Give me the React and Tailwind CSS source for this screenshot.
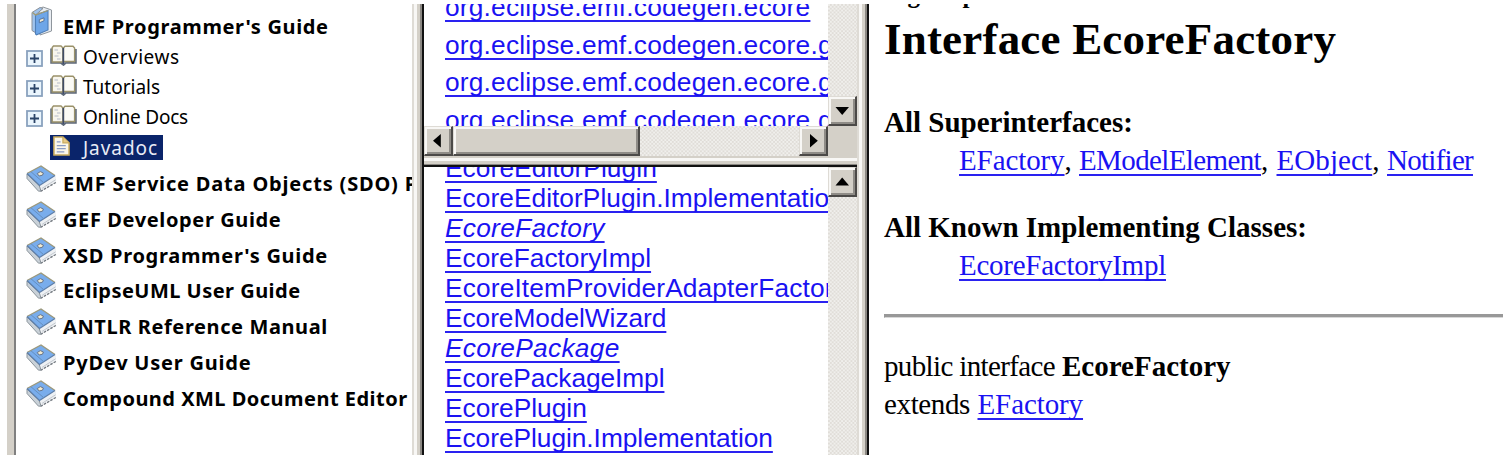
function ClosedBook() {
  return (
    <svg className="h-[28px] w-[31px] shrink-0" viewBox="0 0 31 28">
      <path d="M15 26 L30 17.5 V12 L29 10.5 L13.5 21 Z" fill="#eef1f4" />
      <path d="M14.5 26.4 L30 17.4" stroke="#6f757c" strokeWidth="1.3" strokeDasharray="2.6 1.2" fill="none" />
      <path d="M16 23.4 L29.6 14.8" stroke="#c3c8ce" strokeWidth="1" fill="none" />
      <path d="M1 9 L1 13.5 L12.5 26.2 L15 26 L13.2 20.5 Z" fill="#c9d1d8" stroke="#8b949b" strokeWidth="1" />
      <path d="M1 8.5 L15 1 L29 10.5 L13.5 20.5 Z" fill="#79adec" />
      <path d="M1 8.5 L15 1 L29 10.5" fill="none" stroke="#9b987c" strokeWidth="1.4" />
      <path d="M1 8.5 L13.5 20.5 L29 10.5" fill="none" stroke="#5d7ea8" strokeWidth="1.2" />
      <path d="M5 6.8 L17.6 17.6" stroke="#6690bf" strokeWidth="1" />
      <path d="M11.2 8.6 L14.3 6.6 L17.4 8 L16.5 10.2 L13.2 11 Z" fill="#f1ead0" stroke="#66748a" strokeWidth="1" />
    </svg>
  );
}

function GuideBook() {
  return (
    <svg className="mt-[2px] ml-[5px] h-[30px] w-[22px] shrink-0" viewBox="0 0 22 30">
      <path d="M8 3 L12 1 L20.5 4 V25 L9 29 Z" fill="#e9edf2" stroke="#8f969d" strokeWidth="1" />
      <path d="M1 6.5 L9 1.5 L12 2.5 L5 8.5 V27 L1 24.5 Z" fill="#9fc3ec" stroke="#8b9199" strokeWidth="1" />
      <path d="M4.5 9 L17 4.5 V24 L5.5 28.8 L4.5 28 Z" fill="#6ea6e8" stroke="#4f7fb8" strokeWidth="1.1" />
      <path d="M1.5 6.5 L4.5 9 L17 4.5" fill="none" stroke="#a39b72" strokeWidth="1.3" />
      <path d="M8.3 13.6 L13 11.8 V14.8 L8.3 16.8 Z" fill="#f4ead0" stroke="#53739f" strokeWidth="1" />
    </svg>
  );
}

function OpenBook() {
  return (
    <svg className="-mt-[5px] h-[21px] w-[27px] shrink-0" viewBox="0 0 27 21">
      <path d="M1 3.5 V18 H10.5 L13.5 20.2 L16 18 H26 V4" fill="#8593a8" stroke="#5d6878" strokeWidth="1.5" />
      <path d="M2.2 2.5 L3.5 1 H11 L13 3 V17 H2.2 Z" fill="#f8f6ee" stroke="#9a9169" strokeWidth="1.4" />
      <path d="M13.4 3 L15 1.2 H23 L24.6 3 V16.5 H13.4 Z" fill="#fbfaf5" stroke="#9a9169" strokeWidth="1.4" />
      <path d="M13.3 3 V19" stroke="#414c66" strokeWidth="1.7" />
      <path d="M4.5 5 H8 M7 8 H10.5 M4.5 11 H8.5 M7 14 H10.5" stroke="#b3b9c8" strokeWidth="1.2" />
    </svg>
  );
}

function PageIcon() {
  return (
    <svg className="ml-[3px] h-[20px] w-[17px] shrink-0" viewBox="0 0 18 22" preserveAspectRatio="none">
      <path d="M1 1 H10.5 L17 7.5 V21 H1 Z" fill="#fbf7ea" stroke="#c9ab5c" strokeWidth="1.6" />
      <path d="M10.5 1 V7.5 H17" fill="#e7c987" stroke="#c9ab5c" strokeWidth="1.3" />
      <path d="M4 6.5 H8 M4 10.5 H13.5 M4 14 H13.5 M4 17.5 H12" stroke="#8a9cc4" strokeWidth="1.4" />
    </svg>
  );
}

function Expander() {
  return (
    <svg className="h-[17px] w-[17px] shrink-0" viewBox="0 0 17 17">
      <rect x="1" y="1" width="15" height="15" fill="#eaf5fd" stroke="#8aa2be" strokeWidth="1.8" />
      <path d="M4 8.5 H13 M8.5 4 V13" stroke="#2b4468" strokeWidth="1.8" />
    </svg>
  );
}

const chapters = [
  { label: "Overviews", track: "tracking-[0.5px]" },
  { label: "Tutorials", track: "tracking-normal" },
  { label: "Online Docs", track: "tracking-[-0.22px]" },
];

const guides = [
  { label: "EMF Service Data Objects (SDO) Programmer's Guide", track: "tracking-[0.82px]" },
  { label: "GEF Developer Guide", track: "tracking-[0.62px]" },
  { label: "XSD Programmer's Guide", track: "tracking-[0.7px]" },
  { label: "EclipseUML User Guide", track: "tracking-[0.47px]" },
  { label: "ANTLR Reference Manual", track: "tracking-[0.6px]" },
  { label: "PyDev User Guide", track: "tracking-[0.78px]" },
  { label: "Compound XML Document Editor", track: "tracking-[0.48px]" },
];

const packages = [
  "org.eclipse.emf.codegen.ecore",
  "org.eclipse.emf.codegen.ecore.genmodel",
  "org.eclipse.emf.codegen.ecore.genmodel.impl",
  "org.eclipse.emf.codegen.ecore.genmodel.util",
];

const classes = [
  { label: "EcoreEditorPlugin", style: "tracking-[0.08px]" },
  { label: "EcoreEditorPlugin.Implementation", style: "tracking-[0.04px]" },
  { label: "EcoreFactory", style: "italic tracking-[0.27px]" },
  { label: "EcoreFactoryImpl", style: "" },
  { label: "EcoreItemProviderAdapterFactory", style: "tracking-[0.14px]" },
  { label: "EcoreModelWizard", style: "tracking-[-0.05px]" },
  { label: "EcorePackage", style: "italic tracking-[0.3px]" },
  { label: "EcorePackageImpl", style: "tracking-[-0.08px]" },
  { label: "EcorePlugin", style: "" },
  { label: "EcorePlugin.Implementation", style: "tracking-[-0.04px]" },
];

const checker =
  "bg-[repeating-conic-gradient(#e0ddd8_0%_25%,#f0efec_0%_50%)] bg-[length:3.75px_3.75px]";

const link =
  "text-[#1a12f2] underline decoration-[#2a22f0] decoration-[2px] underline-offset-[4px] [text-decoration-skip-ink:none]";

const raised =
  "border-t border-r-2 border-b-2 border-l border-t-[#dedbd5] border-r-[#4c4a48] border-b-[#4c4a48] border-l-[#dedbd5] bg-[#d4d0c8] shadow-[inset_2px_2px_0_#f8f7f5,inset_-2px_-2px_0_#8f8c87]";

const arrows = {
  left: "M16.8 8 V21.5 L9 14.7 Z",
  right: "M11 8 V21.5 L18.8 14.7 Z",
  up: "M7.5 18.5 H21 L14.2 10.5 Z",
  down: "M7.5 11 H21 L14.2 19 Z",
};

function ScrollButton({ dir }) {
  return (
    <div className={"h-[30px] w-[29px] shrink-0 overflow-hidden " + raised}>
      <svg className="-mt-px -ml-px h-[30px] w-[29px] max-w-none" viewBox="0 0 29 30">
        <path d={arrows[dir]} fill="#000" />
      </svg>
    </div>
  );
}

function FrameEdge() {
  return (
    <div className="flex w-[12px] shrink-0">
      <div className="w-[2px] bg-[#dedbd5]" />
      <div className="w-[3px] bg-[#f8f7f5]" />
      <div className="w-[3px] bg-[#d4d0c8]" />
      <div className="w-[2px] bg-[#8b8883]" />
      <div className="w-[2px] bg-[#111]" />
    </div>
  );
}

function Contents() {
  return (
    <nav className="flex w-[405px] shrink-0 border-l-[7px] border-[#d4d0c8]">
      <div className="w-[2px] shrink-0 bg-[#808080]" />
      <div className="min-w-0 flex-1 overflow-hidden pl-[10px] font-['Noto_Sans','DejaVu_Sans',sans-serif] whitespace-nowrap text-black">
        <div className="flex h-[39px] items-start text-[20px] font-bold">
          <GuideBook />
          <span className="ml-[10px] pt-[6px] leading-[34px] tracking-[0.64px]">EMF Programmer's Guide</span>
        </div>
        {chapters.map((c) => (
          <div key={c.label} className="flex h-[30px] items-center text-[19px]">
            <Expander />
            <div className="ml-[7px] flex">
              <OpenBook />
            </div>
            <span className={"ml-[6px] pb-[2px] leading-[30px] " + c.track}>{c.label}</span>
          </div>
        ))}
        <div className="flex h-[32px] pt-[2px]">
          <div className="ml-[24px] flex h-[25px] w-[113px] items-start bg-[#0a246a] pt-px text-[19px] text-[#e8ebf5]">
            <PageIcon />
            <span className="ml-[13px] leading-[25px] tracking-[0.93px]">Javadoc</span>
          </div>
        </div>
        {guides.map((g) => (
          <div key={g.label} className="flex h-[35.8px] text-[20px] font-bold">
            <ClosedBook />
            <span className={"ml-[6px] pt-[2px] leading-[33px] " + g.track}>{g.label}</span>
          </div>
        ))}
      </div>
    </nav>
  );
}

function PackageFrame() {
  return (
    <section className="flex h-[152px] shrink-0">
      <div className="flex w-[404px] flex-col">
        <div className="h-[122px] overflow-hidden pl-[21px]">
          <div className="-mt-[15px] text-[26.3px] tracking-[0.2px] whitespace-nowrap">
            {packages.map((p) => (
              <div key={p} className="h-[37.67px] leading-[37.67px]">
                <a className={link}>{p}</a>
              </div>
            ))}
          </div>
        </div>
        <div className="flex h-[30px]">
          <ScrollButton dir="left" />
          <div className={"w-[187px] " + raised} />
          <div className={"flex-1 " + checker} />
          <ScrollButton dir="right" />
        </div>
      </div>
      <div className="flex w-[29px] flex-col bg-[#d4d0c8]">
        <div className={"h-[92px] " + checker} />
        <ScrollButton dir="down" />
      </div>
    </section>
  );
}

function ClassFrame() {
  return (
    <section className="flex h-[288px]">
      <div className="w-[404px] overflow-hidden pl-[21px]">
        <div className="-mt-[14px] text-[26.3px] whitespace-nowrap">
          {classes.map((c) => (
            <div key={c.label} className="h-[30px] leading-[30px]">
              <a className={link + " " + c.style}>{c.label}</a>
            </div>
          ))}
        </div>
      </div>
      <div className={"w-[29px] " + checker}>
        <ScrollButton dir="up" />
      </div>
    </section>
  );
}

function Details() {
  return (
    <main className="min-w-0 flex-1 overflow-hidden pl-[15px] font-['Liberation_Serif',serif] text-[29px] whitespace-nowrap text-black">
      <div className="-mt-[24px] h-[30px] text-[25px] leading-[30px] font-bold">org.eclipse.emf.ecore</div>
      <h1 className="mt-[4px] h-[50px] text-[45px] leading-[50px] font-bold tracking-[0.2px]">Interface EcoreFactory</h1>
      <dl className="mt-[39px] leading-[38px]">
        <dt className="h-[38px] font-bold">All Superinterfaces:</dt>
        <dd className="flex h-[38px] pl-[75px]">
          <span className="w-[120px]"><a className={link + " tracking-[-0.1px]"}>EFactory</a>,</span>
          <span className="w-[197.5px]"><a className={link + " tracking-[-0.62px]"}>EModelElement</a>,</span>
          <span className="w-[110.5px]"><a className={link + " tracking-[0.1px]"}>EObject</a>,</span>
          <a className={link + " tracking-[-0.73px]"}>Notifier</a>
        </dd>
        <dt className="mt-[29px] h-[38px] font-bold">All Known Implementing Classes:</dt>
        <dd className="h-[38px] pl-[75px]">
          <a className={link + " tracking-[-0.25px]"}>EcoreFactoryImpl</a>
        </dd>
      </dl>
      <hr className="mt-[30px] h-[4px] border-t-[3px] border-b border-l border-t-[#989898] border-b-[#d8d8d8] border-l-[#999]" />
      <div className="mt-[29px] leading-[38px]">
        <p className="flex h-[38px]">
          <span className="w-[178px] tracking-[-0.63px]">public interface</span>
          <b>EcoreFactory</b>
        </p>
        <p className="flex h-[38px]">
          <span className="w-[93.5px] tracking-[-0.37px]">extends</span>
          <a className={link + " tracking-[-0.1px]"}>EFactory</a>
        </p>
      </div>
    </main>
  );
}

export default function App() {
  return (
    <div className="h-[462px] w-[1503px] overflow-hidden bg-white pt-[4px] pl-[7px]">
      <div className="flex h-[451px]">
        <Contents />
        <FrameEdge />
        <div className="flex w-[433px] shrink-0 flex-col font-['Liberation_Sans',sans-serif]">
          <PackageFrame />
          <div className="flex h-[11px] shrink-0 flex-col">
            <div className="h-[2px] bg-[#d4d0c8]" />
            <div className="h-[3px] bg-[#f8f7f5]" />
            <div className="h-[3px] bg-[#d4d0c8]" />
            <div className="h-px bg-[#8b8883]" />
            <div className="h-[2px] bg-[#111]" />
          </div>
          <ClassFrame />
        </div>
        <FrameEdge />
        <Details />
      </div>
    </div>
  );
}
